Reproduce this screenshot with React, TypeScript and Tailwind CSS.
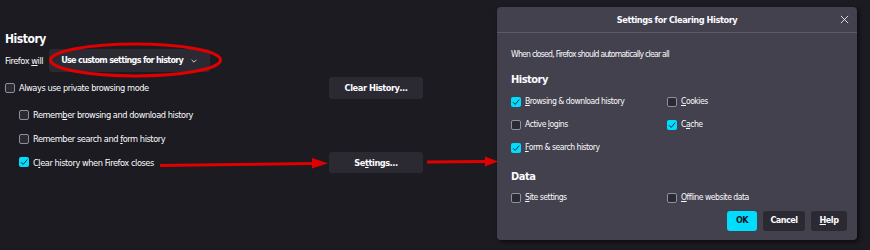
import React from 'react';

const Check = ({ checked }: { checked?: boolean }) => (
  <span
    className={
      checked
        ? 'flex h-[10px] w-[10px] shrink-0 items-center justify-center rounded-[2px] bg-[#00ddff]'
        : 'h-[10px] w-[10px] shrink-0 rounded-[2px] border border-[#8f8f9d] bg-[#2b2a33]'
    }
  >
    {checked && (
      <svg viewBox="0 0 10 10" className="h-[10px] w-[10px]">
        <path d="M2 5.2 L4.2 7.4 L8.2 2.6" fill="none" stroke="#15141a" strokeWidth="0.9" />
      </svg>
    )}
  </span>
);

const Option = ({ label, checked, className = '' }: { label: React.ReactNode; checked?: boolean; className?: string }) => (
  <label className={`flex items-center gap-[4px] whitespace-nowrap ${className}`}>
    <Check checked={checked} />
    <span>{label}</span>
  </label>
);

const Btn = ({ children, className = '' }: { children: React.ReactNode; className?: string }) => (
  <button className={`flex items-center justify-center whitespace-nowrap rounded-[3px] bg-[#2b2a33] font-bold text-[#fbfbfe] ${className}`}>
    {children}
  </button>
);

export default function App() {
  return (
    <div className="relative flex h-[250px] w-[870px] overflow-hidden bg-[#1c1b22] font-['DejaVu_Sans_Condensed',sans-serif] text-[9.2px] tracking-[-0.45px] text-[#fbfbfe]">
      {/* Left: preferences panel */}
      <div className="flex w-[497px] flex-col pl-[5px] pt-[31px]">
        <h2 className="text-[12px] font-bold leading-[16px]">History</h2>
        <div className="mt-[2px] flex items-center gap-[6px]">
          <span>
            Firefox <u>w</u>ill
          </span>
          <div className="flex h-[23px] w-[161px] items-center justify-between whitespace-nowrap rounded-[3px] bg-[#2b2a33] pl-[12px] pr-[12px] text-[9px] font-bold tracking-[-0.7px]">
            <span>Use custom settings for history</span>
            <svg viewBox="0 0 10 10" className="h-[8px] w-[8px]">
              <path d="M2 3.5 L5 6.5 L8 3.5" fill="none" stroke="#fbfbfe" strokeWidth="1" />
            </svg>
          </div>
        </div>

        <div className="mt-[5px] flex h-[22px] w-[418px] items-center justify-between">
          <Option label="Always use private browsing mode" />
          <Btn className="h-[22px] w-[94px]">Clear History…</Btn>
        </div>

        <div className="ml-[14px] mt-[8px] flex h-[16px] items-center">
          <Option label={<>Remem<u>b</u>er browsing and download history</>} />
        </div>
        <div className="ml-[14px] mt-[8px] flex h-[16px] items-center">
          <Option label={<>Remember search and <u>f</u>orm history</>} />
        </div>
        <div className="ml-[14px] mt-[5px] flex h-[21px] w-[404px] items-center justify-between">
          <Option checked label={<>C<u>l</u>ear history when Firefox closes</>} />
          <Btn className="h-[21px] w-[94px]">Se<u>t</u>tings…</Btn>
        </div>
      </div>

      {/* Dialog: Settings for Clearing History */}
      <div className="mt-[7px] flex h-[233px] w-[360px] flex-col rounded-[4px] bg-[#42414d] shadow-[2px_2px_4px_rgba(0,0,0,0.6)]">
        <div className="relative flex h-[26px] items-center justify-center border-b border-[#5b5a66] font-bold">
          Settings for Clearing History
          <svg viewBox="0 0 10 10" className="absolute right-[8px] top-[8px] h-[9px] w-[9px]">
            <path d="M1 1 L9 9 M9 1 L1 9" fill="none" stroke="#fbfbfe" strokeWidth="0.9" />
          </svg>
        </div>
        <div className="flex flex-1 flex-col px-[14px] text-[8.6px] tracking-[-0.5px]">
          <p className="mt-[14px] leading-[14px] tracking-[-0.75px]">When closed, Firefox should automatically clear all</p>
          <h3 className="mt-[12px] text-[11px] font-bold leading-[14px]">History</h3>
          <div className="mt-[7px] grid grid-cols-[156px_1fr] gap-y-[8px]">
            <Option checked className="h-[15px]" label={<><u>B</u>rowsing &amp; download history</>} />
            <Option className="h-[15px]" label={<><u>C</u>ookies</>} />
            <Option className="h-[15px]" label={<>Active <u>l</u>ogins</>} />
            <Option checked className="h-[15px]" label={<>C<u>a</u>che</>} />
            <Option checked className="h-[15px]" label={<><u>F</u>orm &amp; search history</>} />
          </div>
          <h3 className="mt-[15px] text-[11px] font-bold leading-[14px]">Data</h3>
          <div className="mt-[6px] grid grid-cols-[156px_1fr]">
            <Option className="h-[15px]" label={<><u>S</u>ite settings</>} />
            <Option className="h-[15px]" label={<><u>O</u>ffline website data</>} />
          </div>
          <div className="mt-[6px] flex justify-end gap-[6px] text-[9px]">
            <button className="flex h-[20px] w-[30px] items-center justify-center rounded-[3px] bg-[#00ddff] font-bold text-[#15141a]">OK</button>
            <Btn className="h-[20px] w-[42px]">Cancel</Btn>
            <Btn className="-mr-[4px] h-[20px] w-[36px]"><u>H</u>elp</Btn>
          </div>
        </div>
      </div>

      {/* Red annotations drawn over the screenshot */}
      <svg className="pointer-events-none absolute left-0 top-0" width="870" height="250" viewBox="0 0 870 250">
        <ellipse cx="135.5" cy="60" rx="85" ry="16" fill="none" stroke="#e00000" strokeWidth="3" />
        <line x1="160" y1="165.5" x2="314" y2="163.5" stroke="#e00000" strokeWidth="3" />
        <polygon points="312,158 328,163.3 312,168.5" fill="#e00000" />
        <line x1="427" y1="162" x2="487" y2="161.5" stroke="#e00000" strokeWidth="3" />
        <polygon points="485,156.5 498,161.5 485,166.5" fill="#e00000" />
      </svg>
    </div>
  );
}
